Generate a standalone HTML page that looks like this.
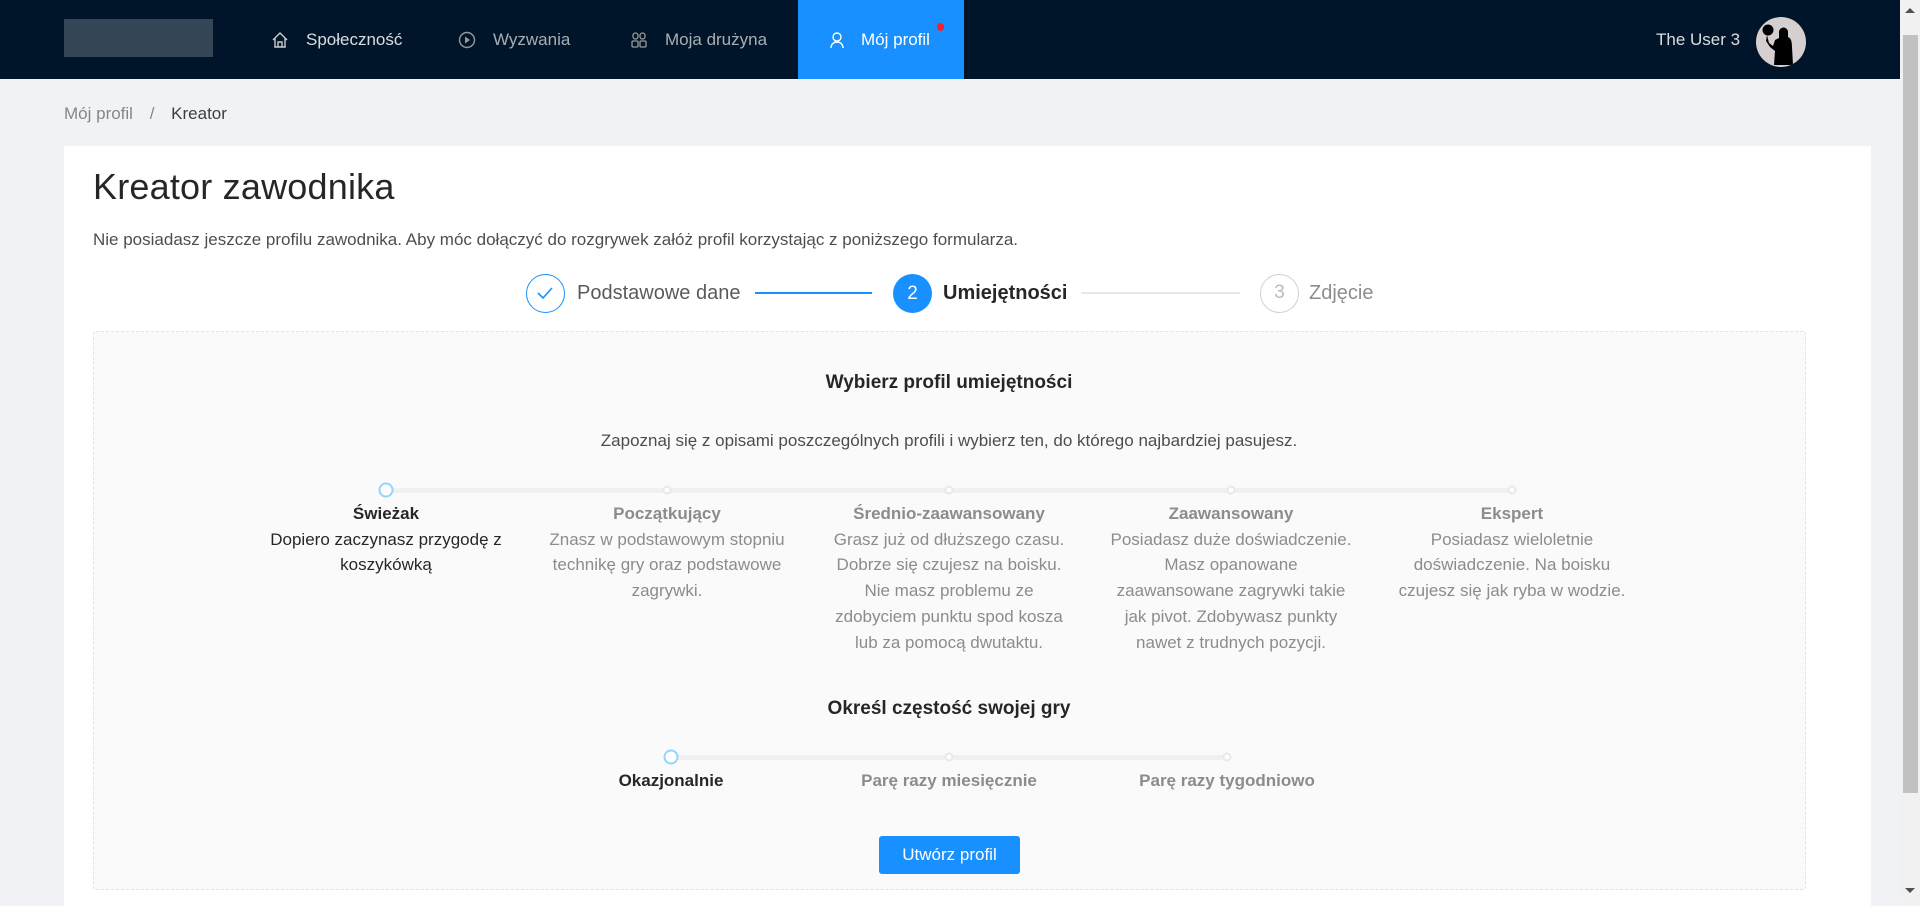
<!DOCTYPE html>
<html><head><meta charset="utf-8"><style>
*{box-sizing:border-box;margin:0;padding:0}
body{width:1920px;height:901px;overflow:hidden;background:#f0f2f5;font-family:"Liberation Sans",sans-serif;color:rgba(0,0,0,.85);position:relative;font-size:17px}
.hdr{position:absolute;left:0;top:0;width:1900px;height:79px;background:#001529}
.logo{position:absolute;left:64px;top:19px;width:149px;height:38px;background:#344556}
.nav{position:absolute;top:0;height:79px;line-height:79px;font-size:17px;color:rgba(255,255,255,.65)}
.nav svg{position:absolute;top:31px;left:0}
.nav span{position:absolute;left:35px;white-space:nowrap}
.act{background:#1890ff;color:#fff}
.sb{position:absolute;right:0;top:0;width:20px;height:901px;background:#f1f1f1}
.thumb{position:absolute;left:3px;top:35px;width:15px;height:758px;background:#c1c1c1}
.abs{position:absolute;white-space:nowrap}
.card{position:absolute;left:64px;top:146px;width:1807px;height:760px;background:#fff}
.box{position:absolute;left:93px;top:331px;width:1713px;height:559px;background:#fafafa;border:1px dashed #e3e3e3;border-radius:3px}
.c{position:absolute;transform:translateX(-50%);text-align:center;white-space:nowrap}
.lab{font-size:17px;line-height:25.7px;color:#8c8c8c}
.lab b{font-weight:bold}
.dot{position:absolute;width:9px;height:9px;border:2px solid #e8e8e8;border-radius:50%;background:#fff;transform:translate(-50%,-50%)}
.handle{position:absolute;width:15px;height:15px;border:2px solid #91d5ff;border-radius:50%;background:#fff;transform:translate(-50%,-50%)}
</style></head><body>
<div class="hdr">
<div class="logo"></div>
<div class="nav" style="left:271px;width:160px;color:rgba(255,255,255,.85)"><svg width="18" height="18" viewBox="0 0 18 18" style="left:0"><path d="M2 9L9 2l7 7M4 7v9h10V7M7 16v-5h4v5" fill="none" stroke="#ccc" stroke-width="1.4"/></svg><span>Społeczność</span></div>
<div class="nav" style="left:458px;width:150px"><svg width="18" height="18" viewBox="0 0 18 18"><circle cx="9" cy="9" r="7.5" fill="none" stroke="#999" stroke-width="1.4"/><path d="M7 5.5v7l5-3.5z" fill="#999"/></svg><span>Wyzwania</span></div>
<div class="nav" style="left:630px;width:160px"><svg width="18" height="18" viewBox="0 0 18 18"><rect x="3" y="2" width="5" height="6" rx="2.5" fill="none" stroke="#999" stroke-width="1.3"/><rect x="10" y="2" width="5" height="6" rx="2.5" fill="none" stroke="#999" stroke-width="1.3"/><rect x="2" y="10" width="6" height="6" rx="1" fill="none" stroke="#999" stroke-width="1.3"/><rect x="10" y="10" width="6" height="6" rx="1" fill="none" stroke="#999" stroke-width="1.3"/></svg><span>Moja drużyna</span></div>
<div class="nav act" style="left:798px;width:166px"><svg width="18" height="18" viewBox="0 0 18 18" style="left:30px"><circle cx="9" cy="6" r="4" fill="none" stroke="#fff" stroke-width="1.4"/><path d="M3 17c0-4 3-6 6-6s6 2 6 6" fill="none" stroke="#fff" stroke-width="1.4"/></svg><span style="left:63px">Mój profil</span><div style="position:absolute;left:139px;top:23px;width:7px;height:8px;border-radius:4px;background:#f5222d"></div></div>
<div class="abs" style="left:1656px;top:0;line-height:79px;font-size:17px;color:rgba(255,255,255,.85)">The User 3</div>
<div style="position:absolute;left:1756px;top:17px;width:50px;height:50px;border-radius:50%;background:#d6cfcf;overflow:hidden">
<svg width="50" height="50" viewBox="0 0 50 50"><circle cx="12" cy="13" r="5.5" fill="#000"/><path d="M11 18l2 8 4 3 2-6 4-2 0-6a4.5 4.5 0 0 1 9 0v5c3 1 4 5 4 10l1 18H18l1-14-5-4-4-6z" fill="#000"/></svg></div>
</div>
<div class="sb"><div style="position:absolute;left:5px;top:8px;border:5px solid transparent;border-bottom:5px solid #505050;border-top:0"></div><div class="thumb"></div><div style="position:absolute;left:5px;top:888px;border:5px solid transparent;border-top:5px solid #505050;border-bottom:0"></div></div>

<div class="abs" style="left:64px;top:104px;font-size:17px;color:rgba(0,0,0,.45)">Mój profil <span style="margin:0 12px">/</span> <span style="color:rgba(0,0,0,.75)">Kreator</span></div>
<div class="card"></div>
<div class="abs" style="left:93px;top:166px;font-size:36px;font-weight:500;color:rgba(0,0,0,.85);letter-spacing:0.2px">Kreator zawodnika</div>
<div class="abs" style="left:93px;top:230px;font-size:17px;color:rgba(0,0,0,.7)">Nie posiadasz jeszcze profilu zawodnika. Aby móc dołączyć do rozgrywek załóż profil korzystając z poniższego formularza.</div>

<div style="position:absolute;left:526px;top:274px;width:39px;height:39px;border:1.5px solid #1890ff;border-radius:50%"><svg width="36" height="36" viewBox="0 0 36 36"><path d="M11 18l5 5 9-10" fill="none" stroke="#1890ff" stroke-width="1.6"/></svg></div>
<div class="abs" style="left:577px;top:282px;font-size:20px;color:rgba(0,0,0,.65)">Podstawowe dane</div>
<div style="position:absolute;left:755px;top:292px;width:117px;height:1.5px;background:#1890ff"></div>
<div style="position:absolute;left:893px;top:274px;width:39px;height:39px;border-radius:50%;background:#1890ff;color:#fff;text-align:center;line-height:39px;font-size:19px">2</div>
<div class="abs" style="left:943px;top:282px;font-size:20px;font-weight:bold;color:rgba(0,0,0,.85)">Umiejętności</div>
<div style="position:absolute;left:1081px;top:292px;width:159px;height:1.5px;background:#e8e8e8"></div>
<div style="position:absolute;left:1260px;top:274px;width:39px;height:39px;border:1.5px solid #d0d0d0;border-radius:50%;color:#bbb;text-align:center;line-height:36px;font-size:19px">3</div>
<div class="abs" style="left:1309px;top:282px;font-size:20px;color:rgba(0,0,0,.45)">Zdjęcie</div>

<div class="box"></div>
<div class="c" style="left:949px;top:372px;font-size:19px;font-weight:bold;color:rgba(0,0,0,.85)">Wybierz profil umiejętności</div>
<div class="c" style="left:949px;top:431px;font-size:17px;color:rgba(0,0,0,.7)">Zapoznaj się z opisami poszczególnych profili i wybierz ten, do którego najbardziej pasujesz.</div>

<div style="position:absolute;left:386px;top:488px;width:1126px;height:5px;background:#f0f0f0;border-radius:3px"></div>
<div class="dot" style="left:667px;top:490px"></div><div class="dot" style="left:949px;top:490px"></div><div class="dot" style="left:1231px;top:490px"></div><div class="dot" style="left:1512px;top:490px"></div>
<div class="handle" style="left:386px;top:490px"></div>
<div class="c lab" style="left:386px;top:501px;color:rgba(0,0,0,.85)"><b>Świeżak</b><br>Dopiero zaczynasz przygodę z<br>koszykówką</div>
<div class="c lab" style="left:667px;top:501px"><b>Początkujący</b><br>Znasz w podstawowym stopniu<br>technikę gry oraz podstawowe<br>zagrywki.</div>
<div class="c lab" style="left:949px;top:501px"><b>Średnio-zaawansowany</b><br>Grasz już od dłuższego czasu.<br>Dobrze się czujesz na boisku.<br>Nie masz problemu ze<br>zdobyciem punktu spod kosza<br>lub za pomocą dwutaktu.</div>
<div class="c lab" style="left:1231px;top:501px"><b>Zaawansowany</b><br>Posiadasz duże doświadczenie.<br>Masz opanowane<br>zaawansowane zagrywki takie<br>jak pivot. Zdobywasz punkty<br>nawet z trudnych pozycji.</div>
<div class="c lab" style="left:1512px;top:501px"><b>Ekspert</b><br>Posiadasz wieloletnie<br>doświadczenie. Na boisku<br>czujesz się jak ryba w wodzie.</div>

<div class="c" style="left:949px;top:698px;font-size:19px;font-weight:bold;color:rgba(0,0,0,.85)">Określ częstość swojej gry</div>
<div style="position:absolute;left:671px;top:755px;width:556px;height:5px;background:#f0f0f0;border-radius:3px"></div>
<div class="dot" style="left:949px;top:757px"></div><div class="dot" style="left:1227px;top:757px"></div>
<div class="handle" style="left:671px;top:757px"></div>
<div class="c lab" style="left:671px;top:768px;color:rgba(0,0,0,.85)"><b>Okazjonalnie</b></div>
<div class="c lab" style="left:949px;top:768px"><b>Parę razy miesięcznie</b></div>
<div class="c lab" style="left:1227px;top:768px"><b>Parę razy tygodniowo</b></div>

<div style="position:absolute;left:879px;top:836px;width:141px;height:38px;background:#1890ff;border-radius:3px;color:#fff;text-align:center;line-height:38px;font-size:17px">Utwórz profil</div>
</body></html>
